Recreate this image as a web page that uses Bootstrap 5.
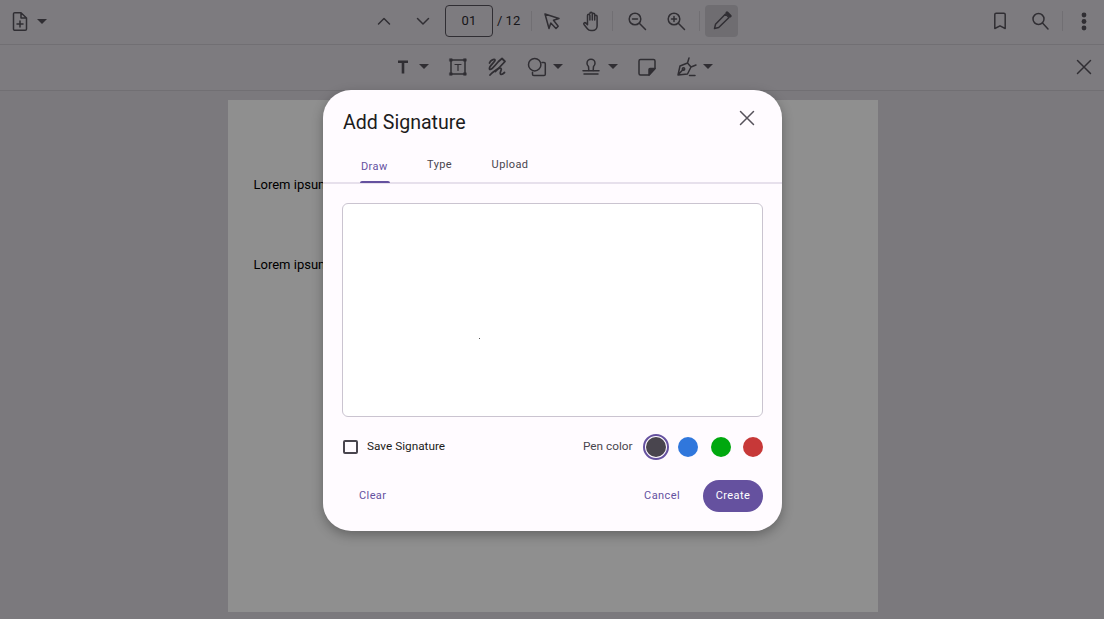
<!DOCTYPE html>
<html lang="en"><head><meta charset="utf-8"><title>Add Signature</title>
<link href="https://cdn.jsdelivr.net/npm/bootstrap@5.3.0/dist/css/bootstrap.min.css" rel="stylesheet">
<style>
html,body{height:100%;overflow:hidden}
body{font-family:Roboto,"Liberation Sans",sans-serif;background:#dbd8df;color:#1d1b20;position:relative}
svg{display:block;flex:none}
.ic{fill:none;stroke:#56525b;stroke-width:1.5;stroke-linecap:round;stroke-linejoin:round}
.tbar{display:grid;grid-template-columns:1fr auto 1fr;align-items:center;background:#dfdce3;border-bottom:1px solid #c9c6cd}
.tb1{height:45px;padding-bottom:2px}.tb2{height:46px;padding-bottom:2px}
.tbtn{width:39px;height:32px;display:flex;align-items:center;justify-content:center}
.tbtn.w40{width:40px}
.caret{width:0;height:0;border-left:5px solid transparent;border-right:5px solid transparent;border-top:5px solid #56525b;flex:none}
.vsep{width:1px;height:20px;background:#c9c6cd;flex:none}
.sepr{margin:0 1px 0 2px}
.pgin{width:48px;height:32px;border:1px solid #56525b;border-radius:4px;font-size:13px;color:#2b292e;display:flex;align-items:center;justify-content:center;margin-left:3px;letter-spacing:.3px}
.pgof{font-size:13px;color:#2b292e;margin-left:4px;width:23px;white-space:nowrap}
.m11{margin-left:11px}.m5{margin-left:5px}.m4{margin-left:4px}
.penb{width:33px;height:32px;background:#c6c3ca;border-radius:4px;display:flex;align-items:center;justify-content:center;margin:0 2px 0 5px}
.leftg{padding-left:8px}
.i24{width:24px;height:24px}
.c4{margin-left:4px}.g17{margin-left:17px}.g15{margin-left:15px}.g16{margin-left:16px}
.docarea{height:528px;display:flex;justify-content:center;padding:9px 0 0 1px}
.sheet{width:650px;height:512px;background:#fff;padding:75px 26px 0;color:#000}
.sheet p{margin:0 0 60px;line-height:20px;font-size:13px;white-space:nowrap}
.scrim{position:absolute;inset:0;background:rgba(0,0,0,.44)}
.sigdlg{position:absolute;left:323px;top:90px;width:459px;height:441px;background:#fffbff;border-radius:28px;box-shadow:0 4px 12px rgba(0,0,0,.3);padding-top:21px}
.sigttl{font-size:19.6px;line-height:24px;margin:0;padding-left:20px;font-weight:400;color:#1d1b20}
.sigx{position:absolute;left:412px;top:16px}
.sigtabs{display:flex;align-items:flex-start;gap:39.5px;height:31px;margin-top:18px;padding:3px 0 0 38px;border-bottom:2px solid #e7e0ec;font-size:11px;font-weight:400;letter-spacing:.4px;color:#49454e}
.stab{white-space:nowrap;line-height:17px;color:#49454e}
.stab.on{margin-top:2px;color:#65519f;position:relative}
.stab.on::after{content:"";position:absolute;left:-1px;right:-2px;top:23px;height:2px;background:#65519f;border-radius:2px 2px 0 0}
.sigpad{height:214px;margin:19px 19px 0;background:#fff;border:1px solid #cac4d0;border-radius:6px;position:relative}
.dotm{position:absolute;left:136px;top:134px;width:1px;height:1px;background:#555}
.optrow{display:flex;align-items:center;margin:17px 19px 0 20px;height:26px}
.cbx{width:14.5px;height:14.5px;border:2px solid #49454e;border-radius:2px;flex:none}
.cbl{font-size:11.8px;margin-left:9.5px;color:#1d1b20}
.pcl{font-size:11.8px;color:#49454e;margin-right:10px}
.swr{width:26px;height:26px;border-radius:50%;border:2px solid #65519f;padding:1px;margin-right:9.5px;flex:none}
.swr span{display:block;width:20px;height:20px;border-radius:50%;background:#49454e}
.swt{width:20px;height:20px;border-radius:50%;flex:none}
.sw1{background:#3077dc;margin-right:12.5px}.sw2{background:#00a80f;margin-right:12.5px}.sw3{background:#c73838}
.actrow{display:flex;align-items:center;margin:20px 19px 0 36px;height:32px;font-size:11px;font-weight:400;letter-spacing:.4px;color:#65519f}
.bcreate{width:60px;height:32px;border-radius:16px;background:#65519f;color:#fff;display:flex;align-items:center;justify-content:center;margin-left:23px}
</style></head><body>
<header class="tbar tb1">
 <div class="d-flex align-items-center leftg">
  <svg class="ic" width="24" height="24" viewBox="0 0 24 24"><path d="M5.500 5a1.300 1.300 0 0 1 1.300-1.300H13l5.500 5.300v11a1.300 1.300 0 0 1-1.300 1.300H6.800a1.300 1.300 0 0 1-1.300-1.300zM13 3.700v5.300h5.500M12 12v6M9 15h6"/></svg>
  <span class="caret m5"></span>
 </div>
 <div class="d-flex align-items-center">
  <span class="tbtn"><svg class="ic" width="24" height="24" viewBox="0 0 24 24"><path d="M6.500 15l5.500-5.500 5.500 5.500"/></svg></span>
  <span class="tbtn"><svg class="ic" width="24" height="24" viewBox="0 0 24 24"><path d="M6.500 9.500l5.500 5.500 5.500-5.500"/></svg></span>
  <span class="pgin">01</span><span class="pgof">/ 12</span>
  <span class="vsep m11"></span>
  <span class="tbtn w40"><svg class="ic" width="24" height="24" viewBox="0 0 24 24"><path d="M5 5l14 4.500-5.500 1.800 4.700 6-2.200 2.200-5.200-5.500-1.800 5.500z"/></svg></span>
  <span class="tbtn w40"><svg class="ic" width="24" height="24" viewBox="0 0 24 24"><path d="M7.500 12V6.500a1.200 1.200 0 0 1 2.400 0V11m0-6.500a1.200 1.200 0 0 1 2.400 0V11m0-5.500a1.200 1.200 0 0 1 2.400 0V11m0-3.500a1.200 1.200 0 0 1 2.400 0V17a4.500 4.500 0 0 1-4.500 4.500h-1.600c-1.600 0-2.700-.6-3.600-1.800L4 15.500c-.8-1.200.8-2.500 1.900-1.400l1.600 1.600V12"/></svg></span>
  <span class="vsep"></span>
  <span class="tbtn m4"><svg class="ic" width="24" height="24" viewBox="0 0 24 24"><circle cx="10" cy="10" r="5.800"/><path d="M14.300 14.300L20.500 20.500M7.500 10h5"/></svg></span>
  <span class="tbtn"><svg class="ic" width="24" height="24" viewBox="0 0 24 24"><circle cx="10" cy="10" r="5.800"/><path d="M14.300 14.300L20.500 20.500M7.500 10h5M10 7.500v5"/></svg></span>
  <span class="vsep m4"></span>
  <span class="penb"><svg class="ic" width="24" height="24" viewBox="0 0 24 24"><path d="M4.500 19.500l1-4.200L15.500 5l3.500 3.500L8.700 18.500z"/><path d="M17 3.800l3.200 3.200" stroke-width="3"/></svg></span>
 </div>
 <div class="d-flex align-items-center justify-content-end">
  <span class="tbtn w40"><svg class="ic" width="24" height="24" viewBox="0 0 24 24"><path d="M6.800 5.500a1.300 1.300 0 0 1 1.300-1.300h7.800a1.300 1.300 0 0 1 1.300 1.300V19.500L12 16.800 6.800 19.500z"/></svg></span>
  <span class="tbtn w40"><svg class="ic" width="24" height="24" viewBox="0 0 24 24"><circle cx="10.500" cy="10" r="5.500"/><path d="M14.500 14l5.500 6"/></svg></span>
  <span class="vsep sepr"></span>
  <span class="tbtn w40"><svg width="24" height="24" viewBox="0 0 24 24" fill="#56525b"><circle cx="12" cy="6" r="2.400"/><circle cx="12" cy="12.500" r="2.400"/><circle cx="12" cy="19" r="2.400"/></svg></span>
 </div>
</header>
<div class="tbar tb2">
 <div></div>
 <div class="d-flex align-items-center">
  <svg class="i24" viewBox="0 0 24 24" fill="#56525b"><path d="M7 5.500h10v2.500h-3.700v10.500h-2.600V8H7z"/></svg>
  <span class="caret c4"></span>
  <svg class="ic i24 g17" viewBox="0 0 24 24"><rect x="5" y="5" width="14" height="14"/><path d="M9 9.500h6M12 9.500v6" stroke-width="1.200"/><path d="M3.800 3.800h2.400v2.400H3.800zM17.800 3.800h2.400v2.400h-2.400zM3.800 17.800h2.400v2.400H3.800zM17.800 17.800h2.400v2.400h-2.400z" fill="#56525b" stroke-width=".6"/></svg>
  <svg class="ic i24 g15" viewBox="0 0 24 24"><path d="M4.500 8c1-3 5-4.500 5.500-3 .6 1.700-6.500 6-5.500 9 1 2 6-4 9-7.500l3.500-3 3 3-9.500 10" stroke-width="1.800"/><path d="M5 20c1.500-2 9-8 11-6.500 1.500 1.200-2 4-.5 5.500 1.300 1 3-.5 4-1.500" stroke-width="1.800"/></svg>
  <svg class="ic i24 g16" viewBox="0 0 24 24"><circle cx="9.700" cy="9.700" r="6.200"/><path d="M17 7.500h2a1.300 1.300 0 0 1 1.300 1.300v10.400a1.300 1.300 0 0 1-1.300 1.300H8.800a1.300 1.300 0 0 1-1.300-1.300v-2"/></svg>
  <span class="caret c4"></span>
  <svg class="ic i24 g16" viewBox="0 0 24 24"><path d="M9.800 15.500l-.3-4C8.500 10.500 8 9.500 8 8.200a4 4 0 0 1 8 0c0 1.300-.5 2.300-1.500 3.300l-.3 4"/><path d="M4 15.800h16M5 19h14"/></svg>
  <span class="caret m5"></span>
  <svg class="ic i24 g17" viewBox="0 0 24 24"><path d="M20 13.500V6a1.500 1.500 0 0 0-1.500-1.500h-13A1.500 1.500 0 0 0 4 6v12.500A1.500 1.500 0 0 0 5.500 20H14z"/><path d="M20 13.500h-5A1 1 0 0 0 14 14.500v5.500z" fill="#56525b"/></svg>
  <svg class="ic i24 g15" viewBox="0 0 24 24" stroke-width="1.200"><path d="M4 20l2-9 7.500-3 3.500 4-3.500 7zM4 20l5-5.500M15 3l-1.500 5M17 12l5-2"/><circle cx="9.500" cy="14" r="1.200"/><path d="M15.500 20.500h5.500"/></svg>
  <span class="caret m5"></span>
 </div>
 <div class="d-flex justify-content-end"><span class="tbtn w40"><svg class="ic" width="24" height="24" viewBox="0 0 24 24"><path d="M5.500 5.500l13 13M18.500 5.500l-13 13"/></svg></span></div>
</div>
<main class="docarea"><div class="sheet"><p>Lorem ipsum dolor sit amet</p><p>Lorem ipsum dolor sit amet</p></div></main>
<div class="scrim"></div>
<section class="sigdlg">
 <h1 class="sigttl">Add Signature</h1>
 <svg class="ic sigx" width="24" height="24" viewBox="0 0 24 24"><path d="M5.500 5.500l13 13M18.500 5.500l-13 13"/></svg>
 <nav class="sigtabs"><span class="stab on">Draw</span><span class="stab">Type</span><span class="stab">Upload</span></nav>
 <div class="sigpad"><span class="dotm"></span></div>
 <div class="optrow"><span class="cbx"></span><span class="cbl">Save Signature</span><span class="pcl ms-auto">Pen color</span><span class="swr"><span></span></span><span class="swt sw1"></span><span class="swt sw2"></span><span class="swt sw3"></span></div>
 <div class="actrow"><span>Clear</span><span class="ms-auto">Cancel</span><span class="bcreate">Create</span></div>
</section>
<script src="https://cdn.jsdelivr.net/npm/bootstrap@5.3.0/dist/js/bootstrap.bundle.min.js"></script>
</body></html>
